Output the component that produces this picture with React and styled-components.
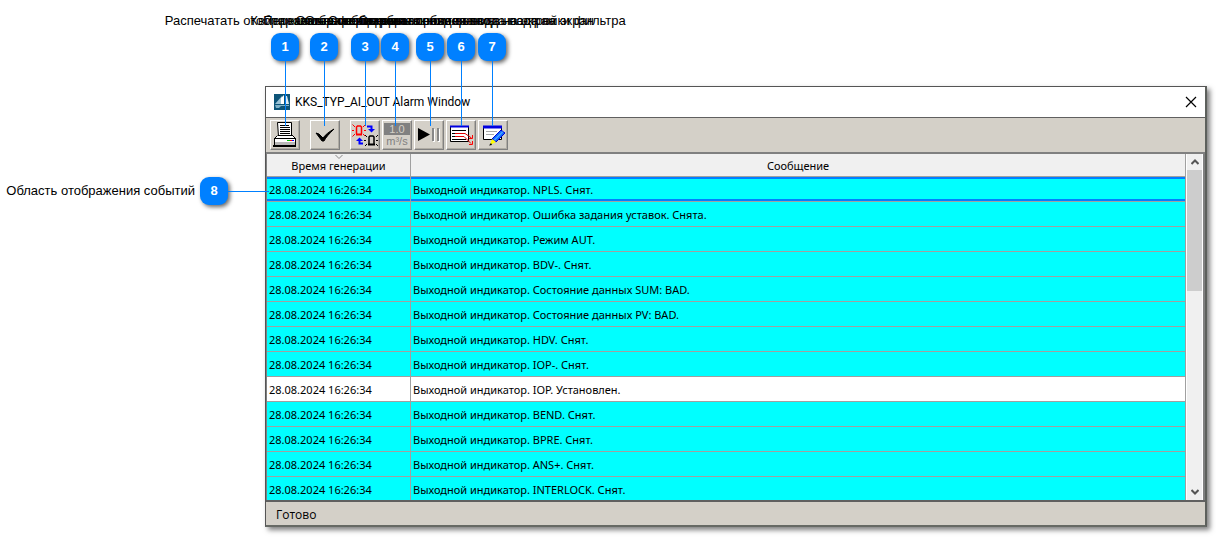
/**
 * Import dependences
 */
import React from 'react';
import styled, { createGlobalStyle } from 'styled-components';

/**
 * Alarm list
 */
const EVENTS = [
	{ text: 'NPLS. Снят.', selected: true },
	{ text: 'Ошибка задания уставок. Снята.' },
	{ text: 'Режим AUT.' },
	{ text: 'BDV-. Снят.' },
	{ text: 'Состояние данных SUM: BAD.' },
	{ text: 'Состояние данных PV: BAD.' },
	{ text: 'HDV. Снят.' },
	{ text: 'IOP-. Снят.' },
	{ text: 'IOP. Установлен.', active: true },
	{ text: 'BEND. Снят.' },
	{ text: 'BPRE. Снят.' },
	{ text: 'ANS+. Снят.' },
	{ text: 'INTERLOCK. Снят.' },
];

/**
 * Callouts over the toolbar, x is the center of the badge
 */
const CALLOUTS = [
	{ id: 1, x: 285, text: 'Распечатать отображаемые сообщения' },
	{ id: 2, x: 324, text: 'Квитировать сообщения' },
	{ id: 3, x: 365, text: 'Переключение на новые события' },
	{ id: 4, x: 395, text: 'Отображение единиц измерения' },
	{ id: 5, x: 430, text: 'Остановить обновление вывода на экран' },
	{ id: 6, x: 461, text: 'Сформировать новое окно вывода на экран' },
	{ id: 7, x: 492, text: 'Открыть окно для ввода настройки фильтра' },
];

/**
 * Icons
 */
const LogoIcon = () => (
	<svg width="16" height="16" viewBox="0 0 16 16" aria-hidden="true">
		<rect width="16" height="16" fill="#0d5478" />
		<path d="M1 10 L8 2 V10 Z" fill="#9cc3d6" />
		<path d="M7 4 L10 1 V10 H7 Z" fill="#fff" />
		<path d="M11 2 L13 2 L15 10 H11 Z" fill="#dcebf2" />
		<path d="M1 11 H15 V12 H7 L5 14 H2 Z" fill="#7fb0c6" />
	</svg>
);

const PrintIcon = () => (
	<svg width="26" height="26" viewBox="0 0 26 26" aria-hidden="true">
		<path d="M5.500 0.500 H19.500 V14.500 H6.500 Z" fill="#fff" stroke="#000" />
		<path d="M8 3.500 H17 M8 5.500 H18 M8 7.500 H18 M8 9.500 H18 M8 11.500 H18" stroke="#000" />
		<path d="M5.500 13.500 L2.500 16.500 V23.500 H23.500 V16.500 L20.500 13.500" fill="#fff" stroke="#000" />
		<path d="M6 13.500 H21 M2 16.500 H24" stroke="#000" />
		<path d="M3 20 H23 V23 H3 Z" fill="#b8b8b8" />
		<path d="M1 24 H24" stroke="#000" strokeWidth="2" />
		<path d="M15 18.500 H18" stroke="#00c000" />
		<path d="M18 18.500 H20" stroke="#f00" />
		<path d="M20 18.500 H22" stroke="#00f" />
	</svg>
);

const CheckIcon = () => (
	<svg width="26" height="26" viewBox="0 0 26 26" aria-hidden="true">
		<path d="M4 11 L7 12 L11 16 C14 12 17 10 22 7 C17 12 14 15 12 19 H10 Z" fill="#000" stroke="#000" />
	</svg>
);

const SwapIcon = () => (
	<svg width="26" height="26" viewBox="0 0 26 26" fill="none" aria-hidden="true">
		<g stroke="#f00">
			<path d="M4.500 12 V5 L5.500 4 H8.500 L9.500 5 V12" strokeWidth="1.500" />
			<path d="M4 12.500 H10" strokeWidth="2" />
			<path d="M0.500 2.500 L3 5 M0 8.500 H2 M0.500 14.500 L3 12 M13.500 2.500 L11 5 M12 8.500 H14 M11 12 L13 14" />
		</g>
		<g stroke="#000">
			<path d="M17 22 V15 L18 14 H21 L22 15 V22" strokeWidth="1.500" />
			<path d="M16 22.500 H23" strokeWidth="2" />
			<path d="M13 13 L15 15 M12 18.500 H14 M13 24 L15 22 M26 13 L24 15 M24 18.500 H26 M24 22 L26 24" />
		</g>
		<path d="M15 4.500 H19.500 V8" stroke="#00f" strokeWidth="2" />
		<path d="M16 7 H23 L19.500 10.500 Z" fill="#00f" />
		<path d="M11 21.500 H7.500 V18" stroke="#00f" strokeWidth="2" />
		<path d="M4 19 H11 L7.500 15.500 Z" fill="#00f" />
	</svg>
);

const PauseIcon = () => (
	<svg width="26" height="26" viewBox="0 0 26 26" aria-hidden="true">
		<path d="M2 6 L14 12.500 L2 19 Z" fill="#000" />
		<path d="M16 6 H18 V19 H16 Z M21 6 H23 V19 H21 Z" fill="#888" />
		<path d="M18 7 H19 V20 H17 V19 H18 Z M23 7 H24 V20 H22 V19 H23 Z" fill="#fff" />
	</svg>
);

const ListIcon = () => (
	<svg width="26" height="26" viewBox="0 0 26 26" fill="none" aria-hidden="true">
		<path d="M2.500 4.500 H20.500 V19.500 H2.500 Z" fill="#fff" stroke="#000" />
		<path d="M2 4.500 H21" stroke="#0000e0" strokeWidth="2" />
		<path d="M4 8.500 H18 M4 11.500 H7 M4 14.500 H7 M4 17.500 H18" stroke="#000" />
		<path d="M7 11.500 H17 L23.500 16 M7 14.500 H16 L23 21.500" stroke="#e00000" />
		<path d="M24.500 13 V16.500 H21 M24.500 19 V22.500 H21" stroke="#f00" />
	</svg>
);

const EditIcon = () => (
	<svg width="26" height="26" viewBox="0 0 26 26" fill="none" aria-hidden="true">
		<path d="M3.500 4.500 H21.500 V17.500 H3.500 Z" fill="#fff" stroke="#000" />
		<path d="M3 5 H22" stroke="#0000e0" strokeWidth="3" />
		<path d="M6 9.500 H17 M6 12.500 H14" stroke="#a8a8a8" />
		<path d="M12 17 L21 8 L25 11 L16 20 Z" fill="#1070ff" stroke="#0000d0" />
		<path d="M14 18.500 L23 9.500" stroke="#80c8ff" />
		<path d="M12 17 L16 20 L10 23 Z" fill="#ff0" />
		<path d="M9 23.500 L11 21 L12 23 Z" fill="#000" />
	</svg>
);

const CloseIcon = () => (
	<svg width="12" height="12" viewBox="0 0 12 12" aria-hidden="true">
		<path d="M1 1 L11 11 M11 1 L1 11" stroke="#000" strokeWidth="1.200" />
	</svg>
);

const Chevron = ({ down, thin }) => (
	<svg width="8" height="6" viewBox="0 0 8 6" fill="none" aria-hidden="true">
		<path
			d={down ? 'M0.500 1 L4 4.500 L7.500 1' : 'M0.500 5 L4 1.500 L7.500 5'}
			stroke={thin ? '#888' : '#555'}
			strokeWidth={thin ? 1 : 2}
		/>
	</svg>
);

/**
 * Toolbar component
 */
const Toolbar = () => (
	<ToolbarStyled>
		<ToolButton aria-label="Печать"><PrintIcon /></ToolButton>
		<ToolButton aria-label="Квитировать" $apart><CheckIcon /></ToolButton>
		<ToolButton aria-label="Переключить" $apart><SwapIcon /></ToolButton>
		<ToolButton aria-label="Единицы измерения" disabled>
			<UnitStyled>
				<UnitValue>1.0</UnitValue>
				<span>m³/s</span>
			</UnitStyled>
		</ToolButton>
		<ToolButton aria-label="Пауза"><PauseIcon /></ToolButton>
		<ToolButton aria-label="Список"><ListIcon /></ToolButton>
		<ToolButton aria-label="Настройка"><EditIcon /></ToolButton>
	</ToolbarStyled>
);

/**
 * Event table component
 */
const EventTable = () => (
	<TableStyled>
		<colgroup>
			<TimeCol />
			<col />
		</colgroup>
		<thead>
			<tr>
				<HeadCell>
					<SortMark><Chevron down thin /></SortMark>
					Время генерации
				</HeadCell>
				<HeadCell>Сообщение</HeadCell>
			</tr>
		</thead>
		<tbody>
			{EVENTS.map(event => (
				<RowStyled key={event.text} $active={event.active} $selected={event.selected}>
					<CellStyled>28.08.2024 16:26:34</CellStyled>
					<CellStyled>Выходной индикатор. {event.text}</CellStyled>
				</RowStyled>
			))}
		</tbody>
	</TableStyled>
);

/**
 * App component
 */
const App = () => (
	<PageStyled>
		<GlobalStyle />
		<WindowStyled>
			<TitleBar>
				<LogoIcon />
				<TitleStyled>KKS_TYP_AI_OUT Alarm Window</TitleStyled>
				<CloseButton aria-label="Закрыть"><CloseIcon /></CloseButton>
			</TitleBar>
			<Toolbar />
			<ContentStyled>
				<TablePane>
					<EventTable />
				</TablePane>
				<ScrollBar>
					<ScrollButton aria-label="Вверх"><Chevron /></ScrollButton>
					<ScrollThumb />
					<ScrollButton aria-label="Вниз"><Chevron down /></ScrollButton>
				</ScrollBar>
			</ContentStyled>
			<StatusBar>Готово</StatusBar>
		</WindowStyled>
		{CALLOUTS.map(item => (
			<Callout key={item.id} $x={item.x}>
				<CalloutText>{item.text}</CalloutText>
				<Badge>{item.id}</Badge>
				<Leader />
			</Callout>
		))}
		<SideCallout>
			<CalloutText>Область отображения событий</CalloutText>
			<Badge>8</Badge>
			<Leader $horizontal />
		</SideCallout>
	</PageStyled>
);

/**
 * Styled components
 */
const GlobalStyle = createGlobalStyle`
	* {
		box-sizing: border-box;
	}

	body {
		margin: 0;
		background: #fff;
		color: #000;
	}

	button {
		padding: 0;
		border: 0;
		font: inherit;
	}
`;

const PageStyled = styled.div`
	position: relative;
	display: flex;
	height: 100vh;
	padding: 86px 9px 10px 265px;
	overflow: hidden;
`;

const WindowStyled = styled.div`
	display: flex;
	flex: 1;
	flex-direction: column;
	min-width: 0;
	border: 1px solid #555;
	border-right: 2px solid #5d605c;
	border-bottom: 2px solid #666964;
	box-shadow: 3px 3px 5px rgba(0, 0, 0, 0.5);
`;

const TitleBar = styled.div`
	display: flex;
	align-items: center;
	height: 30px;
	padding: 0 8px;
	background: #fff;
`;

const TitleStyled = styled.div`
	flex: 1;
	margin-left: 5px;
	font: 12px Roboto, sans-serif;
`;

const CloseButton = styled.button`
	display: flex;
	background: none;
`;

const ToolbarStyled = styled.div`
	display: flex;
	gap: 2px;
	height: 37px;
	padding: 2px 4px;
	border-top: 1px solid #606060;
	border-bottom: 2px solid #808080;
	background: #d4d0c8;
`;

const ToolButton = styled.button`
	display: flex;
	align-items: center;
	justify-content: center;
	width: 30px;
	height: 30px;
	margin-left: ${props => (props.$apart ? '8px' : '0')};
	border: 1px solid;
	border-color: #fff #808080 #808080 #fff;
	background: #d4d0c8;
	box-shadow: inset -1px -1px 0 #b0aca4;
`;

const UnitStyled = styled.span`
	display: flex;
	flex-direction: column;
	width: 26px;
	color: #808080;
	font: 11px/12px 'Liberation Sans', sans-serif;
	text-align: center;
`;

const UnitValue = styled.span`
	background: #808080;
	color: #d4d0c8;
`;

const ContentStyled = styled.div`
	display: flex;
	flex: 1;
	min-height: 0;
	border-left: 1px solid #808080;
`;

const TablePane = styled.div`
	flex: 1;
	min-width: 0;
	overflow: hidden;
`;

const TableStyled = styled.table`
	width: 100%;
	border-collapse: separate;
	border-spacing: 0;
	table-layout: fixed;
	font: 11px/16px 'Noto Sans', sans-serif;
`;

const TimeCol = styled.col`
	width: 144px;
`;

const HeadCell = styled.th`
	position: relative;
	height: 23px;
	padding: 2px 0 0;
	border-right: 1px solid #a0a0a0;
	border-bottom: 1px solid #a0a0a0;
	background: #f0f0f0;
	font-weight: normal;
`;

const SortMark = styled.span`
	position: absolute;
	top: 0;
	left: 0;
	display: flex;
	justify-content: center;
	width: 100%;
`;

const CellStyled = styled.td`
	height: 25px;
	padding: 2px 2px 0;
	border-right: 1px solid #a0a0a0;
	border-bottom: 1px solid #a0a0a0;
	white-space: nowrap;
`;

const RowStyled = styled.tr`
	background: ${props => (props.$active ? '#fff' : '#0ff')};

	${CellStyled} {
		box-shadow: ${props => (props.$selected ? 'inset 0 2px #0080ff, inset 0 -2px #0080ff' : 'none')};
	}
`;

const ScrollBar = styled.div`
	display: flex;
	flex-direction: column;
	width: 19px;
	padding: 0 1px;
	border-right: 2px solid #808080;
	background: #f0f0f0;
	box-shadow: inset 1px 0 #fff, inset -1px 0 #fff;
`;

const ScrollButton = styled.button`
	display: flex;
	align-items: center;
	justify-content: center;
	height: 16px;
	background: none;

	&:last-child {
		margin-top: auto;
	}
`;

const ScrollThumb = styled.div`
	height: 35%;
	background: #cdcdcd;
`;

const StatusBar = styled.div`
	height: 25px;
	padding-left: 10px;
	border-top: 2px solid #606060;
	background: #d4d0c8;
	font: 12px/25px 'Open Sans', sans-serif;
`;

const Callout = styled.div`
	position: absolute;
	top: 13px;
	left: ${props => props.$x - 14}px;
	display: flex;
	flex-direction: column;
	align-items: center;
	width: 28px;
`;

const SideCallout = styled.div`
	position: absolute;
	top: 177px;
	left: 12px;
	display: flex;
	align-items: center;
	justify-content: flex-end;
	width: 257px;
`;

const CalloutText = styled.span`
	font: 13px/16px 'Liberation Sans', sans-serif;
	white-space: nowrap;

	${Callout} & {
		margin-bottom: 4px;
	}

	${SideCallout} & {
		margin-right: 5px;
	}
`;

const Badge = styled.span`
	flex-shrink: 0;
	width: 28px;
	height: 28px;
	border-radius: 9px;
	background: #0080ff;
	box-shadow: 2px 2px 4px rgba(0, 0, 0, 0.6);
	color: #fff;
	font: bold 13px/28px 'Liberation Sans', sans-serif;
	text-align: center;
`;

const Leader = styled.span`
	flex-shrink: 0;
	align-self: ${props => (props.$horizontal ? 'center' : 'flex-start')};
	width: ${props => (props.$horizontal ? '41px' : '1px')};
	height: ${props => (props.$horizontal ? '1px' : '65px')};
	margin-left: ${props => (props.$horizontal ? '0' : '14px')};
	background: #0080ff;
`;

// Export App component
export default App;
